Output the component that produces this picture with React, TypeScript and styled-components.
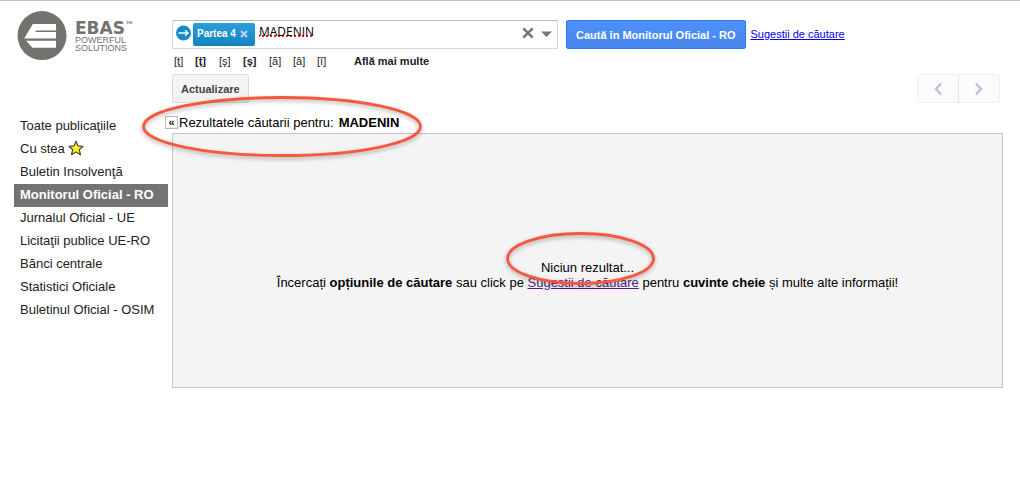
import React from "react";
import styled, { createGlobalStyle, css } from "styled-components";

const GlobalStyle = createGlobalStyle`
  * { box-sizing: border-box; }
  body {
    margin: 0;
    background: #fff;
    color: #000;
    font: 13px/15px "Liberation Sans", Arial, sans-serif;
  }
  button, input { font-family: inherit; margin: 0; }
`;

const Page = styled.div`
  display: grid;
  grid-template-columns: 172px minmax(0, 1fr);
  border-top: 1px solid #c3c3c3;
  padding-right: 17px;
`;

const Header = styled.header`
  padding: 10px 0 0 17px;
`;

const LogoLink = styled.a`
  display: flex;
  gap: 8px;
  color: #72726f;
  text-decoration: none;
`;

const Wordmark = styled.span`
  display: flex;
  flex-direction: column;
  padding-top: 9px;
  font-size: 9px;
  line-height: 8px;
`;

const BrandName = styled.strong`
  display: flex;
  font: bold 17px/16px "DejaVu Sans", sans-serif;
`;

const Trademark = styled.span`
  font-size: 9px;
  line-height: 11px;
`;

const SearchArea = styled.form`
  padding-top: 19px;
`;

const SearchRow = styled.div`
  display: flex;
  align-items: center;
`;

const SearchField = styled.div`
  display: flex;
  align-items: center;
  flex: 0 1 386px;
  min-width: 0;
  height: 29px;
  padding: 0 5px 0 3px;
  border: 1px solid #d9d9d9;
  border-top-color: #bcbcbc;
`;

const IconButton = styled.button`
  display: flex;
  flex: none;
  padding: 0;
  border: 0;
  background: none;
  color: inherit;
  cursor: pointer;
`;

const FilterButton = styled(IconButton)`
  align-self: flex-start;
  padding-top: 4px;
`;

const FieldTools = styled.div`
  display: flex;
  align-items: center;
  gap: 7px;
  padding-bottom: 3px;
  color: #777;
`;

const Chip = styled.span`
  display: flex;
  align-items: center;
  flex: none;
  gap: 4px;
  height: 23px;
  margin: 0 4px 0 1px;
  padding: 0 7px 2px 4px;
  border-radius: 2px;
  background: linear-gradient(#2a9fdf, #1583bd);
  color: #fff;
  font-size: 10px;
  font-weight: bold;
`;

const QueryInput = styled.input`
  flex: 1;
  min-width: 0;
  height: 20px;
  margin-bottom: 7px;
  padding: 0;
  border: 0;
  outline: 0;
  background: none;
  color: #000;
  font: 12px/18px "Open Sans", sans-serif;
  text-decoration: underline dotted #ff1a1a 2px;
  text-decoration-skip-ink: none;
  text-underline-offset: 0;
`;

const SearchButton = styled.button`
  flex: none;
  height: 29px;
  margin: 0 5px 0 8px;
  padding: 0 9px;
  border: 1px solid #3079ed;
  border-radius: 2px;
  background: linear-gradient(#4d90fe, #4787ed);
  color: #fff;
  font-size: 11px;
  font-weight: bold;
  cursor: pointer;
`;

const SuggestLink = styled.a<{ $visited?: boolean }>`
  color: ${(p) => (p.$visited ? "#551a8b" : "#0000ee")};
`;

const SmallSuggest = styled(SuggestLink)`
  font-size: 11px;
  white-space: nowrap;
`;

const LetterRow = styled.div`
  display: flex;
  align-items: center;
  padding: 5px 0 5px 2px;
`;

const Letter = styled.button<{ $bold?: boolean; $width: number }>`
  width: ${(p) => p.$width}px;
  padding: 0;
  border: 0;
  background: none;
  color: #222;
  font-size: 11px;
  line-height: 15px;
  font-weight: ${(p) => (p.$bold ? "bold" : "normal")};
  text-align: left;
  cursor: pointer;
`;

const MoreLink = styled.a`
  margin-left: 13px;
  color: #222;
  font-size: 11px;
  font-weight: bold;
  text-decoration: none;
`;

const Toolbar = styled.div`
  display: flex;
  justify-content: space-between;
  padding-right: 3px;
`;

const grayButton = css`
  height: 29px;
  border: 1px solid #dcdcdc;
  background: linear-gradient(#f5f5f5, #f1f1f1);
  cursor: pointer;
`;

const RefreshButton = styled.button`
  ${grayButton}
  padding: 0 8px;
  border-radius: 2px;
  color: #444;
  font-size: 11px;
  font-weight: bold;
`;

const Pager = styled.div`
  display: flex;
`;

const PagerButton = styled.button`
  ${grayButton}
  display: flex;
  align-items: center;
  justify-content: center;
  width: 42px;
  padding: 0;
  border-color: #f0f0f0;
  background: #fbfbfb;
  color: #b9c1dc;
  &:first-child { border-radius: 3px 0 0 3px; }
  &:last-child { margin-left: -1px; border-radius: 0 3px 3px 0; border-left-color: #e6e6e6; }
`;

const Sidebar = styled.nav`
  padding: 12px 4px 0 14px;
`;

const NavList = styled.ul`
  margin: 0;
  padding: 0;
  list-style: none;
`;

const NavLink = styled.a<{ $active?: boolean }>`
  display: flex;
  align-items: center;
  gap: 3px;
  height: 23px;
  padding: 0 0 3px 6px;
  white-space: nowrap;
  text-decoration: none;
  color: ${(p) => (p.$active ? "#fff" : "#222")};
  background: ${(p) => (p.$active ? "#737373" : "none")};
  font-weight: ${(p) => (p.$active ? "bold" : "normal")};
`;

const Results = styled.main`
  padding-top: 12px;
`;

const ResultsBar = styled.div`
  position: relative;
  display: flex;
  align-items: center;
  gap: 1px;
  width: fit-content;
  margin: 0 0 3px -7px;
`;

const CollapseButton = styled.button`
  width: 13px;
  height: 13px;
  padding: 0;
  border: 1px solid #bbb;
  background: #fff;
  color: #222;
  font-size: 11px;
  font-weight: bold;
  line-height: 9px;
  cursor: pointer;
`;

const ResultsTitle = styled.h1`
  display: flex;
  gap: 5px;
  margin: 0;
  font-size: 13px;
  line-height: 15px;
  font-weight: normal;
`;

const EmptyPanel = styled.section`
  padding: 126px 16px 97px;
  border: 1px solid #c4c4c4;
  background: #f4f4f4;
  text-align: center;
`;

const Message = styled.p`
  margin: 0;
`;

const Circled = styled.span`
  position: relative;
  display: inline-block;
`;

const Ring = styled.svg<{ $left: number; $top: number }>`
  position: absolute;
  left: ${(p) => p.$left}px;
  top: ${(p) => p.$top}px;
  z-index: 1;
  overflow: visible;
  pointer-events: none;
  filter: drop-shadow(0 2px 2px rgba(0, 0, 0, 0.3));
`;

function HighlightRing({ width, height, left, top }: { width: number; height: number; left: number; top: number }) {
  return (
    <Ring $left={left} $top={top} width={width} height={height} aria-hidden="true">
      <ellipse
        cx={width / 2}
        cy={height / 2}
        rx={width / 2 - 1.5}
        ry={height / 2 - 1.5}
        fill="none"
        stroke="#f9573c"
        strokeWidth="2.8"
      />
    </Ring>
  );
}

const LETTERS = [
  { char: "ţ", width: 21 },
  { char: "ț", width: 24, bold: true },
  { char: "ş", width: 24 },
  { char: "ș", width: 26, bold: true },
  { char: "ă", width: 24 },
  { char: "â", width: 24 },
  { char: "î", width: 24 },
];

const SOURCES = [
  { label: "Toate publicaţiile" },
  { label: "Cu stea", starred: true },
  { label: "Buletin Insolvenţă" },
  { label: "Monitorul Oficial - RO", active: true },
  { label: "Jurnalul Oficial - UE" },
  { label: "Licitaţii publice UE-RO" },
  { label: "Bănci centrale" },
  { label: "Statistici Oficiale" },
  { label: "Buletinul Oficial - OSIM" },
];

function Emblem() {
  return (
    <svg width="50" height="50" viewBox="0 0 50 50" aria-hidden="true">
      <circle cx="25" cy="24.6" r="24.5" fill="#72726f" />
      <path d="M15.8 13H39V27.4H7.2Z" fill="#fff" />
      <path d="M9 29.7H39V36.8H15.6Z" fill="#fff" />
      <path d="M18.2 21L19.4 19.6H39V21Z" fill="#72726f" />
    </svg>
  );
}

function Star() {
  return (
    <svg width="16" height="16" viewBox="0 0 16 16" aria-hidden="true">
      <path
        d="M8 1.2L9.9 5.9L15 6.3L11.2 9.7L12.5 14.7L8 12L3.5 14.7L4.8 9.7L1 6.3L6.1 5.9Z"
        fill="#fbf32c"
        stroke="#4c4a2a"
        strokeWidth="1.2"
        strokeLinejoin="round"
      />
    </svg>
  );
}

export default function App() {
  return (
    <>
      <GlobalStyle />
      <Page>
        <Header>
          <LogoLink href="#">
            <Emblem />
            <Wordmark>
              <BrandName>
                EBAS<Trademark>™</Trademark>
              </BrandName>
              <span>POWERFUL</span>
              <span>SOLUTIONS</span>
            </Wordmark>
          </LogoLink>
        </Header>

        <SearchArea onSubmit={(e) => e.preventDefault()}>
          <SearchRow>
            <SearchField>
              <FilterButton type="button" aria-label="Filtre">
                <svg width="16" height="16" viewBox="0 0 16 16">
                  <circle cx="7.5" cy="8" r="7.5" fill="#168bc9" />
                  <path d="M2.5 8H12M9 5.2L12.2 8L9 10.8" fill="none" stroke="#fff" strokeWidth="1.3" />
                </svg>
              </FilterButton>
              <Chip>
                Partea 4
                <IconButton type="button" aria-label="Elimină Partea 4">
                  <svg width="8" height="8" viewBox="0 0 8 8">
                    <path d="M1 1L7 7M7 1L1 7" stroke="#b7cdf5" strokeWidth="2.2" />
                  </svg>
                </IconButton>
              </Chip>
              <QueryInput aria-label="Caută" defaultValue="MADENIN" spellCheck={false} />
              <FieldTools>
                <IconButton type="button" aria-label="Șterge">
                  <svg width="12" height="12" viewBox="0 0 12 12">
                    <path d="M1.3 1.3L10.7 10.7M10.7 1.3L1.3 10.7" stroke="currentColor" strokeWidth="2.6" />
                  </svg>
                </IconButton>
                <IconButton type="button" aria-label="Opţiuni de căutare">
                  <svg width="11" height="8" viewBox="0 0 11 8">
                    <path d="M0 2.5H11L5.5 8Z" fill="currentColor" />
                  </svg>
                </IconButton>
              </FieldTools>
            </SearchField>
            <SearchButton type="submit">Caută în Monitorul Oficial - RO</SearchButton>
            <SmallSuggest href="#">Sugestii de căutare</SmallSuggest>
          </SearchRow>
          <LetterRow>
            {LETTERS.map((l) => (
              <Letter key={l.char} type="button" $bold={l.bold} $width={l.width}>
                [{l.char}]
              </Letter>
            ))}
            <MoreLink href="#">Află mai multe</MoreLink>
          </LetterRow>
          <Toolbar>
            <RefreshButton type="button">Actualizare</RefreshButton>
            <Pager>
              <PagerButton type="button" aria-label="Pagina anterioară">
                <svg width="8" height="14" viewBox="0 0 8 14">
                  <path d="M7 1.5L2 7L7 12.5" fill="none" stroke="currentColor" strokeWidth="2.4" />
                </svg>
              </PagerButton>
              <PagerButton type="button" aria-label="Pagina următoare">
                <svg width="8" height="14" viewBox="0 0 8 14">
                  <path d="M1 1.5L6 7L1 12.5" fill="none" stroke="currentColor" strokeWidth="2.4" />
                </svg>
              </PagerButton>
            </Pager>
          </Toolbar>
        </SearchArea>

        <Sidebar>
          <NavList>
            {SOURCES.map((s) => (
              <li key={s.label}>
                <NavLink href="#" $active={s.active}>
                  {s.label}
                  {s.starred && <Star />}
                </NavLink>
              </li>
            ))}
          </NavList>
        </Sidebar>

        <Results>
          <ResultsBar>
            <CollapseButton type="button" aria-label="Ascunde meniul">«</CollapseButton>
            <ResultsTitle>
              Rezultatele căutarii pentru: <strong>MADENIN</strong>
            </ResultsTitle>
            <HighlightRing width={280} height={61} left={-23} top={-19} />
          </ResultsBar>
          <EmptyPanel>
            <Message>
              <Circled>
                Niciun rezultat...
                <HighlightRing width={149} height={53} left={-35} top={-28} />
              </Circled>
            </Message>
            <Message>
              Încercați <strong>opțiunile de căutare</strong> sau click pe{" "}
              <SuggestLink href="#" $visited>
                Sugestii de căutare
              </SuggestLink>{" "}
              pentru <strong>cuvinte cheie</strong> și multe alte informații!
            </Message>
          </EmptyPanel>
        </Results>
      </Page>
    </>
  );
}
